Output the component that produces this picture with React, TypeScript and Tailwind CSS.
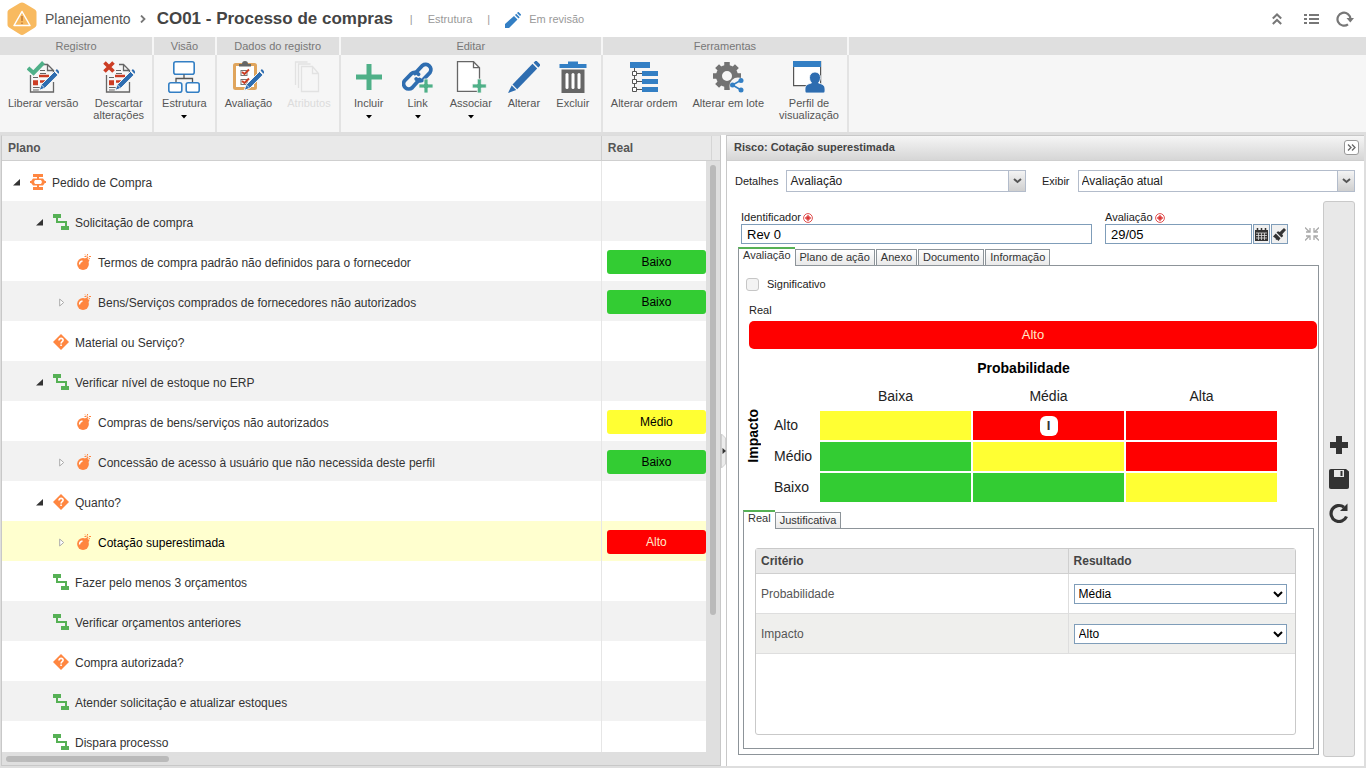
import { useState } from "react";
import type { ReactNode } from "react";
import { clsx } from "clsx";

type NodeIcon = "process" | "activity" | "risk" | "decision";
type Rating = "Alto" | "Médio" | "Baixo";

interface TreeNode {
  label: string;
  icon: NodeIcon;
  level: 0 | 1 | 2;
  toggle?: "open" | "closed";
  rating?: Rating;
}

const nodes: TreeNode[] = [
  { label: "Pedido de Compra", icon: "process", level: 0, toggle: "open" },
  { label: "Solicitação de compra", icon: "activity", level: 1, toggle: "open" },
  { label: "Termos de compra padrão não definidos para o fornecedor", icon: "risk", level: 2, rating: "Baixo" },
  { label: "Bens/Serviços comprados de fornecedores não autorizados", icon: "risk", level: 2, toggle: "closed", rating: "Baixo" },
  { label: "Material ou Serviço?", icon: "decision", level: 1 },
  { label: "Verificar nível de estoque no ERP", icon: "activity", level: 1, toggle: "open" },
  { label: "Compras de bens/serviços não autorizados", icon: "risk", level: 2, rating: "Médio" },
  { label: "Concessão de acesso à usuário que não necessida deste perfil", icon: "risk", level: 2, toggle: "closed", rating: "Baixo" },
  { label: "Quanto?", icon: "decision", level: 1, toggle: "open" },
  { label: "Cotação superestimada", icon: "risk", level: 2, toggle: "closed", rating: "Alto" },
  { label: "Fazer pelo menos 3 orçamentos", icon: "activity", level: 1 },
  { label: "Verificar orçamentos anteriores", icon: "activity", level: 1 },
  { label: "Compra autorizada?", icon: "decision", level: 1 },
  { label: "Atender solicitação e atualizar estoques", icon: "activity", level: 1 },
  { label: "Dispara processo", icon: "activity", level: 1 },
];

const indent = ["pl-[6px]", "pl-[29px]", "pl-[52px]"];

const ratingColor: Record<Rating, string> = {
  Alto: "bg-[#ff0000] text-[#ffe9c8]",
  Médio: "bg-[#ffff33] text-black",
  Baixo: "bg-[#33cc33] text-black",
};

const matrix: { label: Rating; cells: Rating[] }[] = [
  { label: "Alto", cells: ["Médio", "Alto", "Alto"] },
  { label: "Médio", cells: ["Baixo", "Médio", "Alto"] },
  { label: "Baixo", cells: ["Baixo", "Baixo", "Médio"] },
];

/* ---------- Icons ---------- */

const Svg = ({ size = 32, children }: { size?: number; children: ReactNode }) => (
  <svg width={size} height={size} viewBox={`0 0 ${size} ${size}`} fill="none" aria-hidden="true" className="shrink-0">
    {children}
  </svg>
);

const PenOverlay = () => (
  <g>
    <path d="M27.5 10.5l3.5 3.4L17.8 27.2 12 29.500l2.300-5.800z" fill="#2e6db0" stroke="#f6f6f6" strokeWidth="1" />
    <path d="M28.600 9.400l1.300-1.300 2.100 2.100v1.900l-.7.700z" fill="#2e6db0" />
    <path d="M14.600 24l2.900 2.900" stroke="#f6f6f6" strokeWidth=".8" />
  </g>
);

const DocLines = () => (
  <g>
    <path d="M3.500 14v17h23V21M16 3.500h4.500l6 6V12M20.500 3.500v6h6" stroke="#666" strokeWidth="1.300" />
    <path d="M13 9.500h5M13 12.500h6M6 16.500h5M6 26.500h8M6 29h6" stroke="#666" strokeWidth="1.200" />
    <path d="M12 15h10M6 20.500h5M13 20.500h5M6 23h5" stroke="#cc3d24" strokeWidth="2.400" />
  </g>
);

const icons = {
  release: (
    <Svg>
      <DocLines />
      <path d="M1 7l5.500 5L16.500 1.500" stroke="#4fb088" strokeWidth="4" />
      <PenOverlay />
    </Svg>
  ),
  discard: (
    <Svg>
      <DocLines />
      <path d="M1.500 1.500l9 9M10.500 1.500l-9 9" stroke="#cc3d24" strokeWidth="3.600" />
      <PenOverlay />
    </Svg>
  ),
  structure: (
    <Svg>
      <rect x="5.800" y=".8" width="20.400" height="12.400" rx="2" fill="#fff" stroke="#337fc4" strokeWidth="1.600" />
      <rect x=".8" y="21.800" width="13" height="9.400" rx="2" fill="#fff" stroke="#337fc4" strokeWidth="1.600" />
      <rect x="18.200" y="21.800" width="13" height="9.400" rx="2" fill="#fff" stroke="#337fc4" strokeWidth="1.600" />
      <path d="M16 13.500v4M8 21v-3.500h16.500V21" stroke="#555" strokeWidth="1.300" />
    </Svg>
  ),
  evaluate: (
    <Svg>
      <rect x="2.500" y="3.500" width="21" height="24" rx="1" stroke="#e0a55d" strokeWidth="3" fill="#fff" />
      <path d="M7 5.500h12V3h-3a3 3 0 0 0-6 0H7z" fill="#666" />
      <rect x="9" y="9.500" width="6" height="5" stroke="#777" />
      <rect x="9" y="18.500" width="6" height="5" stroke="#777" />
      <path d="M10 11l2.500 2L17 8.500M10 20l2.500 2L17 17.500" stroke="#cc3d24" strokeWidth="2" />
      <PenOverlay />
    </Svg>
  ),
  attributes: (
    <Svg>
      <path d="M8.500 5.500h11l6 7v18h-17zM19.500 5.500v7h6M5.500 27V3h12M2.500 24V1h12" stroke="#e2e2e2" strokeWidth="1.300" />
    </Svg>
  ),
  add: (
    <Svg>
      <path d="M13.500 3h5v10.500H29v5H18.500V29h-5V18.500H3v-5h10.500z" fill="#4fb088" />
    </Svg>
  ),
  link: (
    <Svg>
      <g stroke="#2e6db0" strokeWidth="3.800" strokeLinecap="round">
        <path d="M13 12.500l7.500-8a5.200 5.200 0 0 1 7.500 7l-6.500 6.800a5 5 0 0 1-7.300-.3" />
        <path d="M17.500 18.500l-7.300 8.200a5.200 5.200 0 0 1-7.600-7l6.600-6.800a5 5 0 0 1 7.300.3" />
      </g>
      <path d="M22 18h4v5h5v4h-5v5h-4v-5h-5v-4h5z" fill="#4fb088" stroke="#f6f6f6" strokeWidth=".8" />
    </Svg>
  ),
  associate: (
    <Svg>
      <path d="M2.500.7h16l6 6v23.600h-22z" fill="#fff" stroke="#666" strokeWidth="1.300" />
      <path d="M18.500.7v6h6" stroke="#666" strokeWidth="1.300" />
      <path d="M22.300 18h4v5h5v4h-5v5h-4v-5h-5v-4h5z" fill="#4fb088" stroke="#f6f6f6" strokeWidth=".8" />
    </Svg>
  ),
  edit: (
    <Svg>
      <path d="M24.500 2.800l4.700 4.700L9.200 28.200l-4.700-4.600z" fill="#2e6db0" />
      <path d="M25.600 1.700L27.300 0h1.400L32 3.300v1.400l-1.700 1.700zM3.700 24.600l4.500 4.500L0 32z" fill="#2e6db0" />
    </Svg>
  ),
  remove: (
    <Svg>
      <path d="M11 3V.5h10V3h8.500v4h-27V3z" fill="#337fc4" />
      <path d="M4.500 8.500h23V32h-23z" fill="#666" />
      <rect x="8.500" y="12" width="3" height="16" rx="1.500" fill="#fff" />
      <rect x="14.500" y="12" width="3" height="16" rx="1.500" fill="#fff" />
      <rect x="20.500" y="12" width="3" height="16" rx="1.500" fill="#fff" />
    </Svg>
  ),
  order: (
    <Svg>
      <path d="M2 1h20v6H2zM14 10h16v5H14zM14 18h16v5H14zM14 26h16v5H14z" fill="#337fc4" />
      <path d="M6.500 7v22M6.500 12.500H14M6.500 20.500H14M6.500 28.500H14" stroke="#555" />
      <path d="M4.500 10.500h4v4h-4zM4.500 18.500h4v4h-4zM4.500 26.500h4v4h-4z" fill="#fff" stroke="#555" />
    </Svg>
  ),
  batch: (
    <Svg>
      <g stroke="#737373" strokeWidth="5.500">
        <path d="M15 1v7M15 22v7M1 15h7M22 15h7M5.100 5.100l5 5M20 20l4.900 4.900M24.900 5.100l-5 5M10 20l-4.900 4.900" />
      </g>
      <circle cx="15" cy="15" r="8" stroke="#737373" strokeWidth="6" fill="#f6f6f6" />
      <circle cx="26" cy="25" r="8.500" fill="#f6f6f6" />
      <path d="M28.500 19.500L20.500 24l8.500 5" stroke="#337fc4" strokeWidth="1.600" />
      <circle cx="29" cy="19.500" r="2.500" fill="#337fc4" />
      <circle cx="20.500" cy="24" r="2.500" fill="#337fc4" />
      <circle cx="29" cy="29" r="2.500" fill="#337fc4" />
    </Svg>
  ),
  profile: (
    <Svg>
      <path d="M.6.600h27v24h-27z" fill="#fff" stroke="#555" strokeWidth="1.200" />
      <path d="M0 0h28v6H0z" fill="#337fc4" />
      <path d="M22 11a5.500 5.500 0 0 1 5.500 5.500c0 2.500-1 4-2 5.500 4 1 6.500 2.500 6.500 6V30c0 1.500-1 2-2 2H14c-1 0-2-.5-2-2v-2c0-3.500 2.500-5 6.500-6-1-1.500-2-3-2-5.500A5.500 5.500 0 0 1 22 11z" fill="#2e6db0" stroke="#fff" strokeWidth=".8" />
    </Svg>
  ),
};

const nodeIcons: Record<NodeIcon, ReactNode> = {
  process: (
    <Svg size={16}>
      <path d="M3 0h10v3H3zM3 13h10v3H3zM7 3h2v2H7zM7 11h2v2H7zM0 7h16v2H0z" fill="#ff8640" />
      <path d="M3 4.500h10l1.500 2v3l-1.500 2H3l-1.500-2v-3z" fill="#ff8640" />
      <path d="M5 6h6l1 2-1 2H5L4 8z" fill="#fff" />
    </Svg>
  ),
  activity: (
    <Svg size={16}>
      <path d="M0 0h8v4H0zM8 12h8v4H8z" fill="#56b155" />
      <path d="M4 3v5h9v5" stroke="#56b155" strokeWidth="2" />
    </Svg>
  ),
  risk: (
    <Svg size={16}>
      <circle cx="7" cy="10" r="5.900" fill="#ff8640" />
      <path d="M8.500 5l2-1.500 3 3-1.500 2z" fill="#ff8640" />
      <path d="M3.500 10.500A3.500 3.500 0 0 1 6.500 7" stroke="#fff" strokeWidth="1.300" />
      <path d="M11.500 4.500V0M8.500 2.500h2M13 2.500h2.500M9 .5l1 1M12.500 4l1.500 1" stroke="#ff8640" strokeDasharray="2 1" />
    </Svg>
  ),
  decision: (
    <Svg size={16}>
      <path d="M8 0l8 8-8 8-8-8z" fill="#ff8640" />
      <path d="M6 6.500c0-3 4.300-2.600 4.100-.2C10 7.800 8.100 7.600 8.100 9.500M8.100 10.500V12" stroke="#fff" strokeWidth="1.600" />
    </Svg>
  ),
};

/* ---------- Ribbon ---------- */

interface RibbonAction {
  lines: string[];
  icon: keyof typeof icons;
  menu?: boolean;
  disabled?: boolean;
}

const ribbon: { title: string; wide?: boolean; actions: RibbonAction[] }[] = [
  {
    title: "Registro",
    actions: [
      { lines: ["Liberar versão"], icon: "release" },
      { lines: ["Descartar", "alterações"], icon: "discard" },
    ],
  },
  { title: "Visão", actions: [{ lines: ["Estrutura"], icon: "structure", menu: true }] },
  {
    title: "Dados do registro",
    actions: [
      { lines: ["Avaliação"], icon: "evaluate" },
      { lines: ["Atributos"], icon: "attributes", disabled: true },
    ],
  },
  {
    title: "Editar",
    wide: true,
    actions: [
      { lines: ["Incluir"], icon: "add", menu: true },
      { lines: ["Link"], icon: "link", menu: true },
      { lines: ["Associar"], icon: "associate", menu: true },
      { lines: ["Alterar"], icon: "edit" },
      { lines: ["Excluir"], icon: "remove" },
    ],
  },
  {
    title: "Ferramentas",
    actions: [
      { lines: ["Alterar ordem"], icon: "order" },
      { lines: ["Alterar em lote"], icon: "batch" },
      { lines: ["Perfil de", "visualização"], icon: "profile" },
    ],
  },
];

function Ribbon() {
  return (
    <div className="flex h-[95px] shrink-0 bg-[#f6f6f6]">
      {ribbon.map((group) => (
        <section key={group.title} className="flex shrink-0 flex-col">
          <h2 className="h-[18px] border-r-2 border-[#f6f6f6] bg-[#dfdfdf] text-center text-[11px] leading-[18px] text-[#777]">
            {group.title}
          </h2>
          <div
            className={clsx(
              "flex flex-1 items-start gap-[15px] border-r-2 border-[#e3e3e3] pt-[6px]",
              group.wide ? "px-[11px]" : "px-2"
            )}
          >
            {group.actions.map((action) => (
              <button
                key={action.lines[0]}
                disabled={action.disabled}
                className={clsx(
                  "flex min-w-[34px] flex-col items-center text-[11px] leading-[12px]",
                  action.disabled ? "text-[#dcdcdc]" : "text-[#555]"
                )}
              >
                {icons[action.icon]}
                <span className="mt-1 whitespace-nowrap">
                  {action.lines.map((line) => (
                    <span key={line} className="block">{line}</span>
                  ))}
                </span>
                {action.menu && (
                  <svg width="6" height="4" viewBox="0 0 6 4" className="mt-[6px]" aria-hidden="true">
                    <path d="M0 0h6L3 3.500z" fill="#000" />
                  </svg>
                )}
              </button>
            ))}
          </div>
        </section>
      ))}
      <div className="h-[18px] flex-1 bg-[#dfdfdf]" />
    </div>
  );
}

/* ---------- Title bar ---------- */

function TitleBar() {
  return (
    <header className="flex h-[37px] shrink-0 items-center bg-white pl-[7px] pr-3">
      <svg width="30" height="34" viewBox="0 0 30 34" fill="none" aria-hidden="true">
        <path d="M15 .5c1 0 1.500.3 2.500.8l10 6c1.500.9 2 1.700 2 3.200v12c0 1.500-.5 2.300-2 3.200l-10 6.300c-2 1.200-3 1.200-5 0l-10-6.300c-1.500-.9-2-1.700-2-3.200v-12c0-1.500.5-2.300 2-3.200l10-6c1-.5 1.500-.8 2.500-.8z" fill="#f8ba60" />
        <path d="M15 9.500l8 14H7z" stroke="#fff" strokeWidth="1.500" strokeLinejoin="round" />
        <path d="M15 14v5M15 20.500V22" stroke="#c27a35" strokeWidth="1.500" />
      </svg>
      <a href="#planejamento" className="ml-2 pt-[2px] text-[14px] text-[#555]">Planejamento</a>
      <svg width="6" height="8" viewBox="0 0 6 8" fill="none" className="ml-[9px]" aria-hidden="true">
        <path d="M1 .5L4.500 4 1 7.500" stroke="#777" strokeWidth="1.800" />
      </svg>
      <h1 className="ml-[11px] text-[17px] font-bold text-[#444]">CO01 - Processo de compras</h1>
      <span className="ml-[17px] pt-[2px] text-[11px] text-[#999]">|</span>
      <span className="ml-[15px] pt-[2px] text-[11px] text-[#999]">Estrutura</span>
      <span className="ml-[15px] pt-[2px] text-[11px] text-[#999]">|</span>
      <svg width="16" height="16" viewBox="0 0 16 16" className="ml-[15px] mt-[2px]" aria-hidden="true">
        <path d="M9 4l3.500 3.500L4 16H0v-4zM10 3l1.200-1.200 3.500 3.500-1.200 1.200zM12 1l.8-.8c.3-.3.700-.3 1 0l2 2c.3.300.3.700 0 1l-.8.800z" fill="#337fc4" />
      </svg>
      <span className="ml-2 pt-[2px] text-[11px] text-[#999]">Em revisão</span>
      <div className="ml-auto flex items-center gap-4 text-[#777]">
        <button aria-label="Recolher" className="flex w-[18px] justify-center">
          <svg width="10" height="12" viewBox="0 0 10 12" fill="none" aria-hidden="true">
            <path d="M.8 5.500L5 1.500l4.200 4M.8 11L5 7l4.200 4" stroke="currentColor" strokeWidth="2" />
          </svg>
        </button>
        <button aria-label="Lista" className="flex w-[18px] justify-center">
          <svg width="15" height="10" viewBox="0 0 15 10" fill="none" aria-hidden="true">
            <path d="M0 1h3M5 1h10M0 5h3M5 5h10M0 9h3M5 9h10" stroke="currentColor" strokeWidth="2" />
          </svg>
        </button>
        <button aria-label="Atualizar" className="flex w-[18px] justify-center">
          <svg width="18" height="16" viewBox="0 0 18 16" fill="none" aria-hidden="true">
            <path d="M12 13.300A6.500 6.500 0 1 1 14.500 8" stroke="currentColor" strokeWidth="2.200" />
            <path d="M10.500 7H18L14.300 11.500z" fill="currentColor" />
          </svg>
        </button>
      </div>
    </header>
  );
}

/* ---------- Tree ---------- */

function Toggle({ state }: { state?: "open" | "closed" }) {
  if (!state) return <span className="w-4" />;
  return (
    <button className="flex w-4 justify-center" aria-label={state === "open" ? "Recolher item" : "Expandir item"}>
      {state === "open" ? (
        <svg width="7" height="7" viewBox="0 0 7 7" aria-hidden="true">
          <path d="M7 0v6.500H0z" fill="#333" />
        </svg>
      ) : (
        <svg width="6" height="9" viewBox="0 0 6 9" aria-hidden="true">
          <path d="M.7 1v7l4-3.500z" fill="#fff" stroke="#aaa" />
        </svg>
      )}
    </button>
  );
}

function PlanTree() {
  const [selected, setSelected] = useState(9);

  return (
    <section className="flex min-h-0 min-w-0 flex-col border border-[#c8c8c8] border-t-[#dcdcdc] bg-white">
      <div className="flex min-h-0 flex-1">
        <div className="min-w-0 flex-1 overflow-hidden">
          <table className="w-full table-fixed border-separate border-spacing-0 text-left text-[12px]">
            <colgroup>
              <col className="w-[85.2%]" />
              <col />
            </colgroup>
            <thead>
              <tr className="h-[25px] bg-[#e9e9e9] text-[#555]">
                <th className="border-b border-r border-[#cfcfcf] px-[6px]">Plano</th>
                <th className="border-b border-[#cfcfcf] px-[6px]">Real</th>
              </tr>
            </thead>
            <tbody>
              {nodes.map((node, i) => (
                <tr
                  key={node.label}
                  onClick={() => setSelected(i)}
                  className={clsx(
                    "h-10 text-[#333]",
                    i === selected ? "bg-[#ffffcf]" : i % 2 ? "bg-[#f2f2f2]" : "bg-white"
                  )}
                >
                  <td className="border-r border-[#e6e6e6]">
                    <div className={clsx("flex items-center gap-[6px] whitespace-nowrap pt-[2px]", indent[node.level], i === selected && "text-black")}>
                      <Toggle state={node.toggle} />
                      {nodeIcons[node.icon]}
                      <span className="pt-[2px]">{node.label}</span>
                    </div>
                  </td>
                  <td className="pl-[5px] pt-[2px]">
                    {node.rating && (
                      <div className={clsx("h-6 rounded-[3px] text-center leading-6", ratingColor[node.rating])}>
                        {node.rating}
                      </div>
                    )}
                  </td>
                </tr>
              ))}
            </tbody>
          </table>
        </div>
        <div className="flex w-[14px] shrink-0 flex-col bg-[#dfdfdf]">
          <div className="h-[25px] shrink-0 border-b border-[#cfcfcf] bg-[#e9e9e9] pl-[5px]">
            <div className="h-full border-l border-[#d5d5d5]" />
          </div>
          <div className="mx-auto mt-1 h-[73%] w-[6px] rounded-full bg-[#bababa]" />
        </div>
      </div>
      <div className="h-[13px] shrink-0 bg-[#dfdfdf] px-1 pt-1">
        <div className="h-[6px] w-[23%] rounded-full bg-[#bababa]" />
      </div>
    </section>
  );
}

/* ---------- Risk details ---------- */

function ComboBox({ id, options }: { id: string; options: string[] }) {
  return (
    <div className="flex h-[22px] min-w-0 flex-1 border border-[#b3bccb] bg-white">
      <div className="relative flex-1">
        <select id={id} className="h-full w-full appearance-none pl-[3px] text-[12px] text-[#222] outline-none">
          {options.map((option) => (
            <option key={option}>{option}</option>
          ))}
        </select>
        <span className="pointer-events-none absolute inset-y-0 right-0 flex w-[17px] items-center justify-center border-l border-[#b3bccb] bg-gradient-to-b from-[#f4f4f4] to-[#cfcfcf]">
          <svg width="9" height="6" viewBox="0 0 9 6" fill="none" aria-hidden="true">
            <path d="M1 1l3.500 3L8 1" stroke="#555" strokeWidth="2" />
          </svg>
        </span>
      </div>
    </div>
  );
}

const Required = () => (
  <svg width="10" height="10" viewBox="0 0 10 10" fill="none" className="ml-[2px]" aria-hidden="true">
    <circle cx="5" cy="5" r="4.400" stroke="#dc3b3b" strokeWidth=".9" fill="#fff" />
    <path d="M5 2.200v5.600M2.200 5h5.600" stroke="#d81f1f" strokeWidth="1.500" />
    <path d="M3 3l4 4M7 3L3 7" stroke="#dc3b3b" strokeWidth=".6" />
  </svg>
);

function Tabs({ tabs }: { tabs: string[] }) {
  const [active, setActive] = useState(tabs[0]);

  return (
    <div role="tablist" className="relative -mb-px flex items-end text-[11px] text-[#333]">
      {tabs.map((tab) => (
        <button
          key={tab}
          role="tab"
          aria-selected={tab === active}
          onClick={() => setActive(tab)}
          className={clsx(
            "leading-[13px]",
            tab === active
              ? "h-[19px] border-l border-t-2 border-l-[#8d9499] border-t-[#56b155] bg-white px-1 pb-[4px]"
              : "mr-px h-[17px] border border-[#8d9499] bg-gradient-to-b from-white to-[#e9e9e9] px-1"
          )}
        >
          {tab}
        </button>
      ))}
    </div>
  );
}

function RiskMatrix() {
  return (
    <div className="mr-[35px] mt-2 flex">
      <div className="flex w-[29px] shrink-0 items-center pl-[2px] pt-[10px]">
        <span className="rotate-180 text-[14px] font-bold leading-4 text-black [writing-mode:vertical-rl]">Impacto</span>
      </div>
      <table className="w-full min-w-0 flex-1 table-fixed border-separate border-spacing-[2px] text-[14px] text-[#222]">
        <colgroup>
          <col className="w-[44px]" />
          <col />
          <col />
          <col />
        </colgroup>
        <thead>
          <tr className="h-[18px] text-black">
            <td />
            <th colSpan={3} className="pr-[50px] leading-[18px]">Probabilidade</th>
          </tr>
          <tr className="h-[30px]">
            <td />
            {["Baixa", "Média", "Alta"].map((label) => (
              <th key={label} className="pt-1 font-normal">{label}</th>
            ))}
          </tr>
        </thead>
        <tbody>
          {matrix.map((row, r) => (
            <tr key={row.label} className="h-[29px]">
              <th className="text-left font-normal">{row.label}</th>
              {row.cells.map((cell, c) => (
                <td key={c} className={ratingColor[cell]}>
                  {r === 0 && c === 1 && (
                    <div className="mx-auto h-5 w-[18px] rounded-[6px] bg-white text-center text-[13px] font-bold leading-5 text-[#333]">I</div>
                  )}
                </td>
              ))}
            </tr>
          ))}
        </tbody>
      </table>
    </div>
  );
}

const criteria = [
  { id: "probabilidade", label: "Probabilidade", value: "Média", options: ["Baixa", "Média", "Alta"] },
  { id: "impacto", label: "Impacto", value: "Alto", options: ["Baixo", "Médio", "Alto"] },
];

function CriteriaTable() {
  return (
    <div className="min-h-0 flex-1 rounded-[3px] border border-[#c9c9c9]">
      <table className="w-full table-fixed border-separate border-spacing-0 text-left text-[12px] text-[#555]">
        <colgroup>
          <col className="w-[58%]" />
          <col />
        </colgroup>
        <thead>
          <tr className="h-[25px] bg-[#e9e9e9] text-[#444]">
            <th className="border-b border-r border-[#cfcfcf] px-[5px]">Critério</th>
            <th className="border-b border-[#cfcfcf] px-[5px]">Resultado</th>
          </tr>
        </thead>
        <tbody>
          {criteria.map((item) => (
            <tr key={item.id} className="h-10 even:bg-[#efefed]">
              <td className="border-b border-r border-[#dedede] px-[5px]">
                <label htmlFor={item.id}>{item.label}</label>
              </td>
              <td className="border-b border-[#dedede] pl-[5px] pr-[8px]">
                <select id={item.id} defaultValue={item.value} className="block h-5 w-full border border-[#7f9db9] bg-white text-[12px] text-black">
                  {item.options.map((option) => (
                    <option key={option}>{option}</option>
                  ))}
                </select>
              </td>
            </tr>
          ))}
        </tbody>
      </table>
    </div>
  );
}

function RiskForm() {
  return (
    <div className="flex min-w-0 flex-1 flex-col pb-[2px] pt-[10px]">
      <div className="flex items-end pl-[3px]">
        <div className="min-w-0 flex-1">
          <label htmlFor="identificador" className="flex h-[13px] items-center text-[11px]">
            Identificador <Required />
          </label>
          <input id="identificador" defaultValue="Rev 0" className="block h-5 w-full border border-[#7f9db9] px-[5px] text-[13px] text-black outline-none" />
        </div>
        <div className="ml-[13px] w-[147px]">
          <label htmlFor="data" className="flex h-[13px] items-center text-[11px]">
            Avaliação <Required />
          </label>
          <input id="data" defaultValue="29/05" className="block h-5 w-full border border-[#7f9db9] px-[5px] text-[13px] text-black outline-none" />
        </div>
        <button aria-label="Calendário" className="ml-px flex h-5 w-[17px] items-center justify-center border border-[#7f9db9] bg-[#f0f0f0]">
          <svg width="13" height="13" viewBox="0 0 13 13" aria-hidden="true">
            <path d="M0 2h13v11H0z" fill="#333" />
            <path d="M2.500 0v3M6.500 0v3M10.500 0v3" stroke="#333" strokeWidth="1.500" />
            <path d="M1 5h11M1 7.500h11M1 10h11M3.500 5v7M6.500 5v7M9.500 5v7" stroke="#ddd" strokeWidth=".8" />
          </svg>
        </button>
        <button aria-label="Limpar" className="ml-px flex h-5 w-[17px] items-center justify-center border border-[#7f9db9] bg-[#f0f0f0]">
          <svg width="13" height="13" viewBox="0 0 13 13" aria-hidden="true">
            <path d="M11 0l2 2-3.800 4.300 1 1.700-1.700 1.500-5-5L5 3.300l1.800.8zM2.800 5.500l4.700 4.700L5.500 13 4 11.500 3 12l-.5-1.700L0 8.500z" fill="#333" />
          </svg>
        </button>
        <button aria-label="Reduzir" className="mb-[3px] ml-[17px] mr-px">
          <svg width="14" height="14" viewBox="0 0 14 14" fill="none" className="block" aria-hidden="true">
            <path d="M0 .5l4 4M1 5h4V1M14 .5l-4 4M13 5H9V1M0 13.500l4-4M1 9h4v4M14 13.500l-4-4M13 9H9v4" stroke="#aaa" strokeWidth="1.300" />
          </svg>
        </button>
      </div>
      <div className="mt-[3px]">
        <Tabs tabs={["Avaliação", "Plano de ação", "Anexo", "Documento", "Informação"]} />
      </div>
      <div className="mr-px flex min-h-0 flex-1 flex-col border border-[#8d9499] pb-[5px] pl-[4px] pr-[4px] pt-[11px]">
        <label className="flex items-center gap-2 pl-[3px] text-[11px] leading-[14px]">
          <input type="checkbox" className="size-[13px] appearance-none rounded-[3px] border border-[#c6c6c6] bg-[#f3f3f3]" />
          Significativo
        </label>
        <p className="mt-[12px] pl-[6px] text-[11px] leading-[14px]">Real</p>
        <div className="-mr-[3px] ml-[6px] mt-[4px] h-7 rounded-[5px] bg-[#ff0000] text-center text-[13px] leading-7 text-[#ffe9c8]">Alto</div>
        <RiskMatrix />
        <div className="mt-[6px]">
          <Tabs tabs={["Real", "Justificativa"]} />
        </div>
        <div className="flex min-h-0 flex-1 flex-col border border-[#8d9499] pb-[13px] pl-[11px] pr-[17px] pt-[19px]">
          <CriteriaTable />
        </div>
      </div>
    </div>
  );
}

function SideActions() {
  return (
    <aside className="flex w-8 shrink-0 flex-col items-center justify-center gap-[14px] rounded-[3px] border border-[#c9c9c9] bg-[#e8e8e8] text-[#333]">
      <button aria-label="Adicionar">
        <Svg size={20}>
          <path d="M7 1h6v6h6v6h-6v6H7v-6H1V7h6z" fill="currentColor" />
        </Svg>
      </button>
      <button aria-label="Salvar">
        <Svg size={20}>
          <path d="M2 0h15l3 2.500V18c0 1-.7 2-2 2H2c-1.300 0-2-1-2-2V2C0 .8.700 0 2 0z" fill="currentColor" />
          <path d="M5 1h10v7H5z" fill="#e8e8e8" />
          <path d="M11.500 2h2v5h-2z" fill="currentColor" />
        </Svg>
      </button>
      <button aria-label="Desfazer">
        <Svg size={20}>
          <path d="M17.500 13.500A8 8 0 1 1 15 4.200" stroke="currentColor" strokeWidth="3.200" />
          <path d="M18.500.5V8H11z" fill="currentColor" />
        </Svg>
      </button>
    </aside>
  );
}

function RiskPanel() {
  return (
    <section className="flex min-h-0 min-w-0 flex-col border-l border-t border-[#c8c8c8] bg-white">
      <div className="flex h-[25px] shrink-0 items-center justify-between border-b border-[#cfcfcf] bg-gradient-to-b from-[#f5f5f5] to-[#d6d6d6] pb-[2px] pl-[7px] pr-[5px]">
        <h2 className="text-[11px] font-bold text-[#444]">Risco: Cotação superestimada</h2>
        <button aria-label="Recolher painel" className="flex size-[15px] items-center justify-center rounded-[3px] border border-[#999] bg-white">
          <svg width="9" height="7" viewBox="0 0 9 7" fill="none" aria-hidden="true">
            <path d="M1 .5l3 3-3 3M5 .5l3 3-3 3" stroke="#666" strokeWidth="1.300" />
          </svg>
        </button>
      </div>
      <div className="flex min-h-0 flex-1 flex-col pb-[9px] pl-[11px] pr-[9px] pt-[9px] text-[#222]">
        <div className="-ml-[3px] flex shrink-0 items-center text-[11px]">
          <div className="flex min-w-0 flex-[291] items-center gap-2">
            <label htmlFor="detalhes">Detalhes</label>
            <ComboBox id="detalhes" options={["Avaliação"]} />
          </div>
          <div className="ml-4 flex min-w-0 flex-[313] items-center gap-2">
            <label htmlFor="exibir">Exibir</label>
            <ComboBox id="exibir" options={["Avaliação atual"]} />
          </div>
        </div>
        <div className="mt-[9px] flex min-h-0 flex-1 gap-[3px]">
          <RiskForm />
          <SideActions />
        </div>
      </div>
    </section>
  );
}

export default function App() {
  return (
    <div className="flex h-screen flex-col overflow-hidden bg-[#dedede] font-['Liberation_Sans',Arial,sans-serif]">
      <TitleBar />
      <Ribbon />
      <main className="mb-[2px] ml-px mr-[2px] mt-[3px] grid min-h-0 flex-1 grid-cols-[720fr_5px_638fr] grid-rows-[minmax(0,1fr)]">
        <PlanTree />
        <div className="flex items-center bg-white">
          <button aria-label="Recolher plano" className="w-full">
            <svg width="5" height="34" viewBox="0 0 5 34" className="block" aria-hidden="true">
              <path d="M.5 0L4.500 4v26l-4 4z" fill="#ececec" stroke="#cfcfcf" />
              <path d="M1.500 14v6L5 17z" fill="#333" />
            </svg>
          </button>
        </div>
        <RiskPanel />
      </main>
    </div>
  );
}
